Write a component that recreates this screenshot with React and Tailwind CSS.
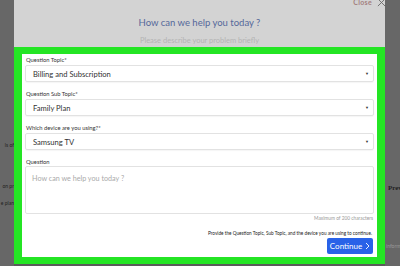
import React from "react";

const fields = [
  { label: "Question Topic*", value: "Billing and Subscription" },
  { label: "Question Sub Topic*", value: "Family Plan" },
  { label: "Which device are you using?*", value: "Samsung TV" },
];

const SelectField = ({ label, value }) => (
  <div className="flex flex-col">
    <label className="text-[5.8px] leading-[10px] h-[10px] text-[#333] pl-[1px]">
      {label}
    </label>
    <div className="h-[17px] border border-[#e2e2e2] rounded-[2px] flex items-center justify-between pl-[7px] pr-[4px] shadow-[0_1px_1px_rgba(0,0,0,0.04)]">
      <span className="text-[7.6px] leading-[10px] text-[#333]">{value}</span>
      <span className="text-[4px] leading-[4px] text-[#333]">▼</span>
    </div>
  </div>
);

export default function App() {
  return (
    <div
      className="w-[400px] h-[266px] bg-[#676767] flex overflow-hidden"
      style={{ fontFamily: "Lato, 'Open Sans', sans-serif" }}
    >
      {/* left page peek */}
      <div className="w-[14px] shrink-0 overflow-hidden flex flex-col items-end text-[5px] leading-[7px] text-[#222] whitespace-nowrap">
        <div className="mt-[142px]">ls of</div>
        <div className="mt-[34px]">on pr</div>
        <div className="mt-[10px]">e plan</div>
      </div>

      {/* modal */}
      <div className="w-[371px] shrink-0 flex flex-col bg-[#d3d3d3]">
        <div className="h-[47px] flex flex-col items-center relative">
          <div className="absolute right-[-1px] top-[-2px] flex items-center gap-[5px]">
            <span className="text-[7px] leading-[9px] font-bold text-[#a47f7f] tracking-[0.3px]">Close</span>
            <svg width="9" height="9" viewBox="0 0 10 10">
              <path d="M1 1L9 9M9 1L1 9" stroke="#6a6a6a" strokeWidth="1" />
            </svg>
          </div>
          <div className="mt-[17px] text-[9.5px] text-[#55689a] leading-[12px]">
            How can we help you today ?
          </div>
          <div className="mt-[7px] text-[7.5px] text-[#b3b3b3] leading-[10px]">
            Please describe your problem briefly
          </div>
        </div>

        <div className="border-[#24e524] border-x-[8px] border-y-[7px] h-[217px] bg-white px-[3px] pt-[1px] flex flex-col">
          <div className="flex flex-col gap-[7px]">
            {fields.map((f) => (
              <SelectField key={f.label} {...f} />
            ))}
          </div>
          <label className="mt-[7px] text-[5.8px] leading-[9px] h-[9px] text-[#333] pl-[1px]">
            Question
          </label>
          <div className="h-[48px] border border-[#e2e2e2] rounded-[2px] px-[6px] pt-[3px] leading-[10px]">
            <span className="text-[7.2px] text-[#aaa]">How can we help you today ?</span>
          </div>
          <div className="text-right text-[4.8px] leading-[6px] text-[#999] mt-[1px] pr-[1px]">
            Maximum of 200 characters
          </div>
          <div className="text-right text-[4.7px] leading-[6px] text-[#222] mt-[9px] pr-[2px]">
            Provide the Question Topic, Sub Topic, and the device you are using to continue.
          </div>
          <div className="flex justify-end mt-[2px] pr-[1px]">
            <div className="h-[16px] w-[46px] bg-[#2962e8] rounded-[2px] text-white text-[8px] leading-[10px] flex items-center justify-center gap-[3px]">
              Continue
              <svg width="5" height="8" viewBox="0 0 5 8">
                <path d="M1 1L4 4L1 7" stroke="white" strokeWidth="0.9" fill="none" />
              </svg>
            </div>
          </div>
        </div>
        <div className="flex-1 bg-[#5a5a5a]"></div>
      </div>

      {/* right page peek */}
      <div className="w-[15px] shrink-0 overflow-hidden flex flex-col whitespace-nowrap">
        <div
          className="mt-[184px] pl-[3px] text-[7px] leading-[9px] font-bold text-[#222]"
          style={{ fontFamily: "'Liberation Serif', serif" }}
        >
          Prev
        </div>
        <div className="mt-[50px] pl-[1px] text-[5px] leading-[7px] text-[#999]">inform</div>
      </div>
    </div>
  );
}
